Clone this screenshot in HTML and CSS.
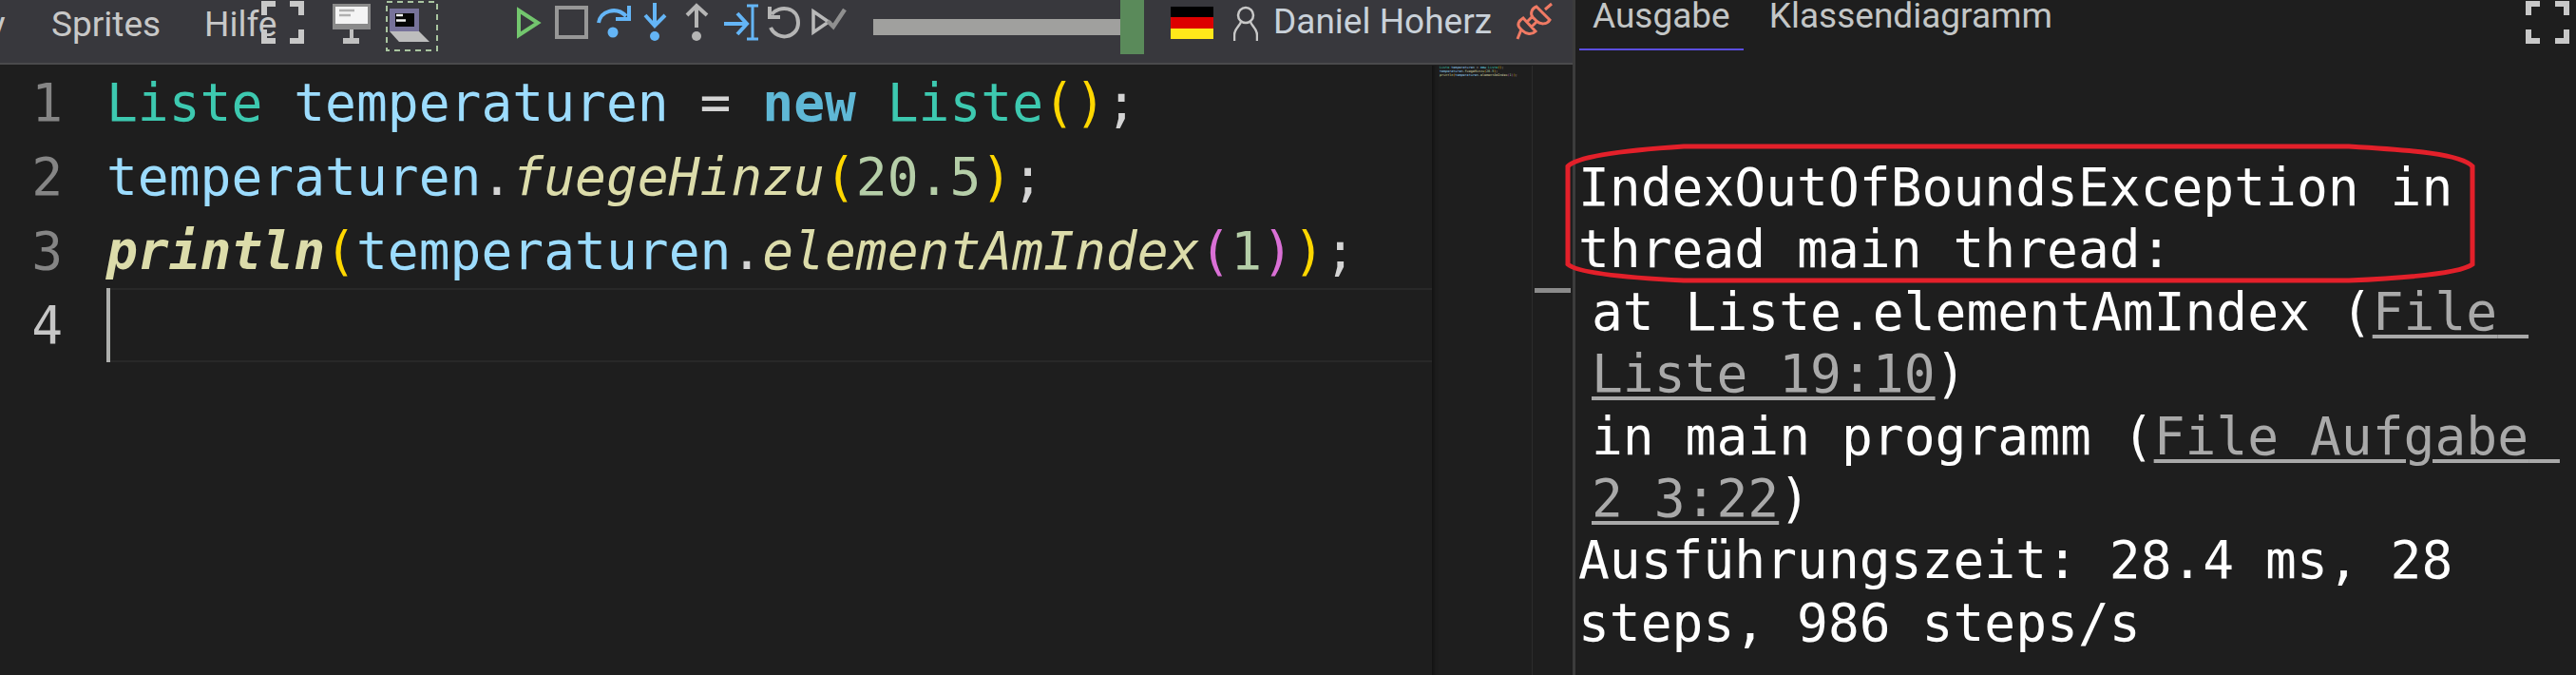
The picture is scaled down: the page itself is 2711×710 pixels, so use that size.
FILE: index.html
```html
<!DOCTYPE html>
<html lang="de">
<head>
<meta charset="utf-8">
<title>Programmierumgebung</title>
<link rel="stylesheet" href="styles.css">
</head>
<body>
<div class="app">
  <section class="left">
    <header class="toolbar">
      <nav class="menu">
        <span class="clipped">y</span>
        <span>Sprites</span>
        <span>Hilfe</span>
      </nav>
      <svg class="ico" width="75" height="68" viewBox="275 0 75 68"><path class="bracket" d="M290 4H278V16M278 31V43H290M305 4H317V16M317 31V43H305"/></svg>
      <svg class="ico" width="55" height="68" viewBox="350 0 55 68"><rect x="350" y="4" width="40" height="27" fill="#8a8a8a"/><rect x="353" y="7" width="34" height="18" fill="#f4f4f4"/><path d="M357 11H373M357 16H369" stroke="#b0b0b0" stroke-width="2.5"/><rect x="368" y="31" width="4" height="10" fill="#c0c0c0"/><rect x="361" y="40" width="17" height="6" fill="#c0c0c0"/></svg>
      <svg class="ico" width="139" height="68" viewBox="405 0 139 68"><rect x="407" y="2" width="53" height="51" fill="none" stroke="#a9c5a0" stroke-width="2" stroke-dasharray="6 5"/><rect x="410" y="9" width="31" height="24" fill="#77729a"/><rect x="416" y="14" width="20" height="14" fill="#050505"/><path d="M417 16H424M417 21.500H427" stroke="#f2f2f2" stroke-width="2.500"/><path d="M410 33H441L452 44H420Z" fill="#bdbdbd"/></svg>
      <svg class="ico" width="38" height="68" viewBox="544 0 38 68"><path d="M546 11L566 24L546 37Z" fill="none" stroke="#73c66e" stroke-width="4"/></svg>
      <svg class="ico" width="44" height="68" viewBox="582 0 44 68"><rect x="586" y="8" width="31" height="31" fill="none" stroke="#979797" stroke-width="4"/></svg>
      <svg class="ico" width="50" height="68" viewBox="626 0 50 68"><path class="blue" d="M630 24C632 12 648 6 659 17"/><path class="blue" d="M662 6V20H648"/><circle cx="645" cy="34" r="5.500" fill="#64b5f6"/></svg>
      <svg class="ico" width="44" height="68" viewBox="676 0 44 68"><path class="blue" d="M689 3V27M679 16L689 27L700 16"/><circle cx="689" cy="38" r="5" fill="#64b5f6"/></svg>
      <svg class="ico" width="40" height="68" viewBox="720 0 40 68"><path class="grey" d="M733 6V29M723 16L733 6L744 16"/><circle cx="733" cy="38" r="5" fill="#b5b5b5"/></svg>
      <svg class="ico" width="45" height="68" viewBox="760 0 45 68"><path class="blue" d="M762 25H784M776 14L786 25L776 36"/><path class="blue thin" d="M786 6H798M792 6V41M786 41H798"/></svg>
      <svg class="ico" width="48" height="68" viewBox="805 0 48 68"><path class="grey" d="M812 15C820 5 840 7 840 24C840 40 818 44 811 29"/><path class="grey" d="M810 7V18H821"/></svg>
      <svg class="ico" width="66" height="68" viewBox="853 0 66 68"><path d="M856 12L872 23L856 34Z" fill="none" stroke="#b9b9b9" stroke-width="3.500"/><path d="M871 22L877 28L889 10" fill="none" stroke="#8f8f8f" stroke-width="4.500"/></svg>
      <div class="slider"><div class="track"></div><div class="handle"></div></div>
      <div class="flag"><i class="black"></i><i class="red"></i><i class="gold"></i></div>
      <svg class="ico user" width="26" height="68" viewBox="1298 0 26 68"><circle cx="1311" cy="16" r="8" fill="none" stroke="#c8c8c8" stroke-width="2.500"/><path d="M1299 43V37C1299 30 1305 27 1306 23M1323 43V37C1323 30 1317 27 1316 23" fill="none" stroke="#c8c8c8" stroke-width="2.500"/></svg>
      <span class="username">Daniel Hoherz</span>
      <svg class="ico" width="40" height="68" viewBox="1595 0 40 68"><path d="M1633 4L1626 10M1617 7L1631 21C1628 26 1621 26 1617 22L1613 18C1610 14 1612 9 1617 7ZM1612 18L1607 23M1617 23L1612 28M1603 19L1616 33C1612 37 1606 36 1602 32L1600 30C1596 26 1598 22 1603 19ZM1601 31L1597 41" fill="none" stroke="#f07a64" stroke-width="3"/></svg>
    </header>
    <div class="editor">
      <div class="gutter">
        <div>1</div><div>2</div><div>3</div><div class="active">4</div>
      </div>
      <div class="code">
        <div class="line"><span class="type">Liste</span> <span class="var">temperaturen</span> <span class="op">=</span> <span class="kw">new</span> <span class="type">Liste</span><span class="gold-b">()</span><span class="op">;</span></div>
        <div class="line"><span class="var">temperaturen</span><span class="op">.</span><span class="fn">fuegeHinzu</span><span class="gold-b">(</span><span class="num">20.5</span><span class="gold-b">)</span><span class="op">;</span></div>
        <div class="line"><span class="fn strong">println</span><span class="gold-b">(</span><span class="var">temperaturen</span><span class="op">.</span><span class="fn">elementAmIndex</span><span class="pink-b">(</span><span class="num">1</span><span class="pink-b">)</span><span class="gold-b">)</span><span class="op">;</span></div>
        <div class="line current"><span class="caret"></span></div>
      </div>
      <div class="minimap">
        <div class="mini-line"><span class="type">Liste</span> <span class="var">temperaturen</span> <span class="op">=</span> <span class="kw">new</span> <span class="type">Liste</span><span class="gold-b">()</span><span class="op">;</span></div>
        <div class="mini-line"><span class="var">temperaturen</span><span class="op">.</span><span class="fn">fuegeHinzu</span><span class="gold-b">(</span><span class="num">20.5</span><span class="gold-b">)</span><span class="op">;</span></div>
        <div class="mini-line"><span class="fn">println</span><span class="gold-b">(</span><span class="var">temperaturen</span><span class="op">.</span><span class="fn">elementAmIndex</span><span class="pink-b">(</span><span class="num">1</span><span class="pink-b">)</span><span class="gold-b">)</span><span class="op">;</span></div>
      </div>
      <div class="ruler"><div class="mark"></div></div>
    </div>
  </section>
  <section class="right">
    <div class="tabs">
      <span class="tab selected">Ausgabe</span>
      <span class="tab">Klassendiagramm</span>
      <svg class="ico expand" width="46" height="68" viewBox="2658 0 46 68"><path class="bracket" d="M2673 4H2661V16M2661 31V43H2673M2689 4H2701V16M2701 31V43H2689"/></svg>
    </div>
    <div class="output">
      <div class="out-line">IndexOutOfBoundsException in thread main thread:</div>
      <div class="out-line trace">at Liste.elementAmIndex (<a class="link">File Liste 19:10</a>)</div>
      <div class="out-line trace">in main programm (<a class="link">File Aufgabe 2 3:22</a>)</div>
      <div class="out-line">Ausführungszeit: 28.4 ms, 28 steps, 986 steps/s</div>
    </div>
    <svg class="callout" width="970" height="155" viewBox="1645 148 970 155"><path d="M1772 154H2472C2540 158 2590 162 2602 175V278C2590 287 2540 292 2472 295H1772C1710 292 1660 287 1650 278V175C1660 164 1710 158 1772 154Z" fill="none" stroke="#e3202a" stroke-width="5"/></svg>
  </section>
</div>
</body>
</html>
```
FILE: styles.css
```css
* { box-sizing: border-box; }
html, body { margin: 0; height: 100%; background: #1e1e1e; overflow: hidden; }
.app { display: flex; width: 2711px; height: 710px; }
.left { width: 1655px; flex-shrink: 0; display: flex; flex-direction: column; }
.right { position: relative; flex: 1; border-left: 3px solid #3c3c3c; background: #1e1e1e; min-width: 0; }

.toolbar { display: flex; height: 68px; flex-shrink: 0; background: #38383d; border-bottom: 2px solid #4a4a4c; font: 37px "Roboto", sans-serif; color: #c9d1d9; }
.menu { display: grid; grid-template-columns: 54px 161px 60px; flex-shrink: 0; line-height: 52px; color: #c8c8c8; }
.clipped { margin-left: -12px; }
.ico { display: block; flex-shrink: 0; }
.bracket { fill: none; stroke: #c8c8c8; stroke-width: 6; }
.blue { fill: none; stroke: #64b5f6; stroke-width: 4; }
.blue.thin { stroke-width: 3; }
.grey { fill: none; stroke: #b5b5b5; stroke-width: 4; }

.slider { display: flex; flex-shrink: 0; align-items: flex-start; }
.track { width: 260px; height: 17px; margin-top: 20px; background: #a0a09e; }
.handle { width: 25px; height: 57px; background: #5a8a5a; }
.flag { display: flex; flex-direction: column; width: 45px; height: 34px; margin: 7px 0 0 28px; flex-shrink: 0; }
.flag i { flex: 1; display: block; }
.black { background: #000; }
.red { background: #dd0000; }
.gold { background: #ffe81a; }
.user { margin-left: 21px; }
.username { margin-left: 16px; width: 255px; flex-shrink: 0; line-height: 46px; white-space: nowrap; }

.editor { flex: 1; display: flex; min-height: 0; padding-top: 1px; font: 54.6px/78px "DejaVu Sans Mono", monospace; }
.gutter { width: 112px; flex-shrink: 0; padding-right: 46px; text-align: right; color: #858585; }
.gutter .active { color: #c6c6c6; }
.code { width: 1395px; flex-shrink: 0; }
.line { height: 78px; white-space: pre; }
.current { position: relative; border-top: 2px solid #282828; border-bottom: 2px solid #282828; }
.caret { display: block; position: absolute; left: 0; top: -2px; width: 4px; height: 78px; background: #aeafad; }
.type { color: #3dc9b0; }
.var { color: #9cdcfe; }
.op { color: #d4d4d4; }
.kw { color: #5fb8d6; font-weight: bold; }
.fn { color: #dcdcaa; font-style: italic; }
.strong { font-weight: bold; }
.num { color: #b5cea8; }
.gold-b { color: #ffd700; }
.pink-b { color: #da70d6; }

.minimap { width: 105px; flex-shrink: 0; padding-left: 8px; font-size: 3.400px; line-height: 4px; box-shadow: inset 6px 0 4px -4px #111; }
.mini-line { white-space: pre; }
.minimap .fn { font-style: normal; }
.ruler { flex: 1; border-left: 1px solid #2c2c2c; padding: 234px 2px 0 2px; }
.mark { height: 5px; background: #8b8b8b; }

.tabs { display: flex; align-items: flex-start; height: 68px; font: 37px/33px "Roboto", sans-serif; color: #c3c6c6; }
.tab { padding: 0 14px; height: 53px; margin-left: 13px; white-space: nowrap; }
.tab.selected { margin-left: 4px; border-bottom: 2px solid #5b4ee0; }
.expand { margin-left: auto; margin-right: 7px; }
.output { padding: 97px 5px 0 3px; font: 54.6px/65.4px "DejaVu Sans Mono", monospace; color: #fff; }
.out-line { white-space: pre-wrap; }
.trace { padding-left: 14px; }
.link { color: #a9a9a9; text-decoration: underline; text-decoration-thickness: 4px; text-underline-offset: 5px; }
.callout { position: absolute; left: -13px; top: 148px; pointer-events: none; }
```
